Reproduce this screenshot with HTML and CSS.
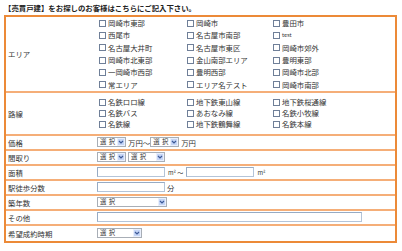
FILE: index.html
```html
<!DOCTYPE html>
<html lang="ja">
<head>
  <meta charset="UTF-8" />
  <title>売買戸建 検索条件</title>
  <link rel="stylesheet" href="styles.css">
</head>
<body>
  <h1 class="title">【売買戸建】をお探しのお客様はこちらにご記入下さい。</h1>

  <table class="search-form">
    <tr>
      <th>エリア</th>
      <td>
        <div class="check-grid area">
          <label class="check"><input type="checkbox"><span>岡崎市東部</span></label>
          <label class="check"><input type="checkbox"><span>岡崎市</span></label>
          <label class="check"><input type="checkbox"><span>豊田市</span></label>
          <label class="check"><input type="checkbox"><span>西尾市</span></label>
          <label class="check"><input type="checkbox"><span>名古屋市南部</span></label>
          <label class="check"><input type="checkbox"><span class="latin">test</span></label>
          <label class="check"><input type="checkbox"><span>名古屋大井町</span></label>
          <label class="check"><input type="checkbox"><span>名古屋市東区</span></label>
          <label class="check"><input type="checkbox"><span>岡崎市郊外</span></label>
          <label class="check"><input type="checkbox"><span>岡崎市北東部</span></label>
          <label class="check"><input type="checkbox"><span>金山南部エリア</span></label>
          <label class="check"><input type="checkbox"><span>豊明東部</span></label>
          <label class="check"><input type="checkbox"><span>一岡崎市西部</span></label>
          <label class="check"><input type="checkbox"><span>豊明西部</span></label>
          <label class="check"><input type="checkbox"><span>岡崎市北部</span></label>
          <label class="check"><input type="checkbox"><span>常エリア</span></label>
          <label class="check"><input type="checkbox"><span>エリア名テスト</span></label>
          <label class="check"><input type="checkbox"><span>岡崎市南部</span></label>
        </div>
      </td>
    </tr>
    <tr>
      <th>路線</th>
      <td>
        <div class="check-grid route">
          <label class="check"><input type="checkbox"><span>名鉄ロロ線</span></label>
          <label class="check"><input type="checkbox"><span>地下鉄東山線</span></label>
          <label class="check"><input type="checkbox"><span>地下鉄桜通線</span></label>
          <label class="check"><input type="checkbox"><span>名鉄バス</span></label>
          <label class="check"><input type="checkbox"><span>あおなみ線</span></label>
          <label class="check"><input type="checkbox"><span>名鉄小牧線</span></label>
          <label class="check"><input type="checkbox"><span>名鉄線</span></label>
          <label class="check"><input type="checkbox"><span>地下鉄鶴舞線</span></label>
          <label class="check"><input type="checkbox"><span>名鉄本線</span></label>
        </div>
      </td>
    </tr>
    <tr>
      <th>価格</th>
      <td>
        <div class="inline">
          <span class="select select-s"><select><option>選 択</option></select><span class="arrow"><svg viewBox="0 0 6 6" width="6" height="6"><path d="M1 2 L3 4 L5 2" fill="none" stroke="#3d5a98" stroke-width="1.2"/></svg></span></span>
          <span class="unit">万円<span class="wave">〜</span></span>
          <span class="select select-s"><select><option>選 択</option></select><span class="arrow"><svg viewBox="0 0 6 6" width="6" height="6"><path d="M1 2 L3 4 L5 2" fill="none" stroke="#3d5a98" stroke-width="1.2"/></svg></span></span>
          <span class="unit">万円</span>
        </div>
      </td>
    </tr>
    <tr>
      <th>間取り</th>
      <td>
        <div class="inline">
          <span class="select select-s"><select><option>選 択</option></select><span class="arrow"><svg viewBox="0 0 6 6" width="6" height="6"><path d="M1 2 L3 4 L5 2" fill="none" stroke="#3d5a98" stroke-width="1.2"/></svg></span></span>
          <span class="select select-m"><select><option>選 択</option></select><span class="arrow"><svg viewBox="0 0 6 6" width="6" height="6"><path d="M1 2 L3 4 L5 2" fill="none" stroke="#3d5a98" stroke-width="1.2"/></svg></span></span>
        </div>
      </td>
    </tr>
    <tr>
      <th>面積</th>
      <td>
        <div class="inline">
          <input type="text" class="text text-s">
          <span class="unit small">m² 〜</span>
          <input type="text" class="text text-s">
          <span class="unit small">m²</span>
        </div>
      </td>
    </tr>
    <tr>
      <th>駅徒歩分数</th>
      <td>
        <div class="inline">
          <input type="text" class="text text-s">
          <span class="unit">分</span>
        </div>
      </td>
    </tr>
    <tr>
      <th>築年数</th>
      <td>
        <div class="inline">
          <span class="select select-l"><select><option>選 択</option></select><span class="arrow"><svg viewBox="0 0 6 6" width="6" height="6"><path d="M1 2 L3 4 L5 2" fill="none" stroke="#3d5a98" stroke-width="1.2"/></svg></span></span>
        </div>
      </td>
    </tr>
    <tr>
      <th>その他</th>
      <td>
        <div class="inline">
          <input type="text" class="text text-l">
        </div>
      </td>
    </tr>
    <tr class="last">
      <th>希望成約時期</th>
      <td>
        <div class="inline">
          <span class="select select-ml"><select><option>選 択</option></select><span class="arrow"><svg viewBox="0 0 6 6" width="6" height="6"><path d="M1 2 L3 4 L5 2" fill="none" stroke="#3d5a98" stroke-width="1.2"/></svg></span></span>
        </div>
      </td>
    </tr>
  </table>
</body>
</html>
```

FILE: styles.css
```css
* {
  box-sizing: border-box;
}

body {
  margin: 2px 4px;
  font-family: "Noto Sans CJK JP", "Noto Sans", sans-serif;
  font-size: 7.4px;
  color: #333;
  background: #fff;
}

.title {
  margin: 0 0 2px;
  font-size: 7.4px;
  line-height: 11px;
  font-weight: bold;
  color: #222;
}

.search-form {
  width: 393px;
  border: 2px solid #ec8a38;
  border-spacing: 0;
}

.search-form th,
.search-form td {
  padding: 0;
  border-bottom: 2px solid #f5ae78;
  vertical-align: middle;
}

.search-form tr.last th,
.search-form tr.last td {
  border-bottom: none;
}

.search-form th {
  width: 91px;
  padding-left: 2px;
  text-align: left;
  font-weight: normal;
  line-height: 13px;
  white-space: nowrap;
}

/* checkbox lists */
.check-grid {
  display: grid;
  grid-template-columns: 88px 86px 88px;
  align-items: center;
  padding-left: 2px;
}

.check-grid.area {
  grid-auto-rows: 12.3px;
}

.check-grid.route {
  grid-auto-rows: 11px;
  padding-top: 4px;
  padding-bottom: 4px;
}

.check {
  display: flex;
  align-items: center;
  gap: 2px;
  white-space: nowrap;
  line-height: 10px;
}

.check input {
  appearance: none;
  width: 7px;
  height: 7px;
  margin: 0;
  border: 1px solid #6f7f98;
  background: #fff;
}

.check .latin {
  font-size: 5.5px;
}

/* single line fields */
.inline {
  display: flex;
  align-items: center;
  gap: 2px;
  height: 13px;
}

.last .inline {
  height: 15px;
}

.unit {
  white-space: nowrap;
}

.unit .wave {
  letter-spacing: -2px;
}

.unit.small {
  font-size: 6px;
  margin: 0 1px;
}

.select {
  display: inline-flex;
  align-items: center;
  height: 10px;
  border: 1px solid #a8aeb6;
  background: #fff;
}

.select select {
  appearance: none;
  flex: 1;
  min-width: 0;
  height: 8px;
  margin: 0;
  padding: 0 0 0 2px;
  border: 0;
  background: none;
  font: inherit;
  font-size: 6.4px;
  line-height: 8px;
  word-spacing: 1px;
  color: #333;
}

.select .arrow {
  display: flex;
  align-items: center;
  justify-content: center;
  width: 8px;
  height: 8px;
  background: #c5d5f6;
  border: 1px solid #e9effc;
}

.select-s { width: 29px; }
.select-m { width: 37px; }
.select-ml { width: 45px; }
.select-l { width: 70px; }

.text {
  height: 10px;
  margin: 0;
  padding: 0;
  border: 1px solid #b4c4d8;
  border-top-color: #97abc4;
  border-left-color: #97abc4;
  background: #fff;
}

.text-s { width: 68px; }
.text-l { width: 265px; }
```
